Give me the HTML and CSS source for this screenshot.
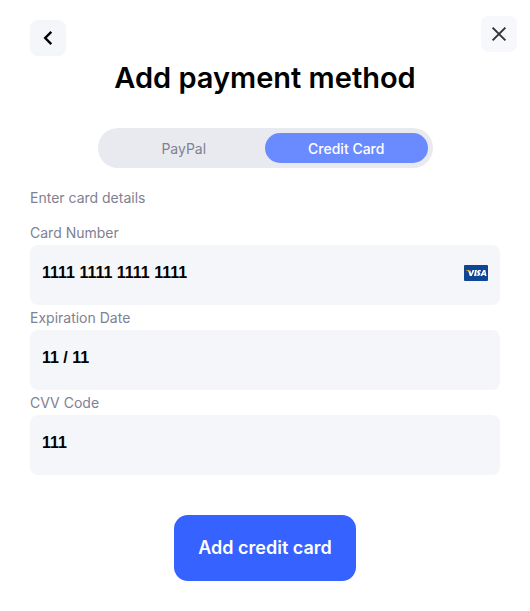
FILE: index.html
```html
<!DOCTYPE html>
<html lang="en">
<head>
    <meta charset="UTF-8">
    <meta name="viewport" content="width=device-width, initial-scale=1.0">
    <title>Add payment method</title>
    <link rel="stylesheet" href="styles.css">
</head>
<body>
    <main class="modal">
        <button type="button" class="icon-button close-button" aria-label="Close">
            <svg width="16" height="16" viewBox="0 0 16 16" fill="none" stroke="#333539" stroke-width="2">
                <path d="M1.6 1.6 14.4 14.4M14.4 1.6 1.6 14.4"/>
            </svg>
        </button>
        <button type="button" class="icon-button" aria-label="Back">
            <svg width="16" height="16" viewBox="0 0 16 16" fill="none" stroke="#000" stroke-width="2.4">
                <path d="M11.3 1.8 5.200 8l6.100 6.200"/>
            </svg>
        </button>

        <h1>Add payment method</h1>

        <div class="tabs">
            <button type="button" class="tab">PayPal</button>
            <button type="button" class="tab active">Credit Card</button>
        </div>

        <form class="card-form">
            <p class="form-hint">Enter card details</p>

            <label for="cardNumber">Card Number</label>
            <div class="field">
                <input type="text" id="cardNumber" value="1111 1111 1111 1111" inputmode="numeric">
                <svg class="card-brand" width="24" height="16" viewBox="0 0 24 16" role="img" aria-label="Card brand">
                    <rect width="24" height="16" rx="1" fill="#0e4595"/>
                    <path d="M4.2 5.800 5.800 10.900h1.900L10.500 5.100H8.600L7.100 8.900 6.400 5.800zM10 10.900 11.100 5.100H12.900L11.800 10.900zM16.900 5.300 16.600 6.800C15.800 6.400 14.800 6.300 14.800 6.800 14.800 7.300 16.500 7.500 16.400 8.900 16.300 10.600 14.100 11.300 12.200 10.600L12.500 9.200C13.400 9.700 14.600 9.700 14.600 9.200 14.600 8.600 13 8.300 13.100 6.900 13.200 5.200 15.300 4.600 16.900 5.300zM16.300 10.900 19.100 5.600C19.300 5.200 19.600 5.100 20 5.100H21.300L22.500 10.900H20.900L20.700 9.900H18.700L18.200 10.900zM19.300 8.700H20.500L20.200 6.800z" fill="#fff"/>
                    <path d="M2 5h2.900c.5 0 .8.200.9.700l.4 1.600C5.200 6.400 3.900 5.900 2 5.600z" fill="#f2ae14"/>
                </svg>
            </div>

            <label for="expirationDate">Expiration Date</label>
            <div class="field">
                <input type="text" id="expirationDate" value="11 / 11" inputmode="numeric">
            </div>

            <label for="cvvCode">CVV Code</label>
            <div class="field">
                <input type="text" id="cvvCode" value="111" inputmode="numeric">
            </div>

            <button type="submit" class="submit-button">Add credit card</button>
        </form>
    </main>
</body>
</html>
```
FILE: styles.css
```css
* {
    box-sizing: border-box;
}
body {
    margin: 0;
    background-color: #fff;
    color: #000;
    font-family: Inter, "Liberation Sans", sans-serif;
}
button,
input {
    font-family: inherit;
    border: none;
}
button {
    cursor: pointer;
}
.modal {
    position: relative;
    padding: 20px 30px 30px;
}
.icon-button {
    display: flex;
    justify-content: center;
    align-items: center;
    width: 36px;
    height: 36px;
    padding: 0;
    border-radius: 8px;
    background-color: #f4f6fa;
}
.close-button {
    position: absolute;
    top: 16px;
    right: 13px;
    background-color: #f7f8fb;
}
h1 {
    margin: 0 0 28px;
    font-size: 29px;
    font-weight: 600;
    line-height: 44px;
    text-align: center;
}

/* payment type switch */
.tabs {
    display: flex;
    width: 100%;
    max-width: 335px;
    height: 40px;
    margin: 0 auto 20px;
    padding: 5px;
    border-radius: 20px;
    background-color: #e8eaef;
}
.tab {
    flex: 1;
    padding: 0;
    border-radius: 15px;
    background-color: transparent;
    color: #808191;
    font-size: 14px;
}
.tab.active {
    background-color: #6a8bff;
    color: #fff;
    font-weight: 500;
}

.card-form {
    display: flex;
    flex-direction: column;
    color: #808191;
    font-size: 14px;
}
.form-hint {
    margin: 0 0 12px;
    line-height: 20px;
}
label {
    line-height: 25px;
}
.field {
    display: flex;
    align-items: center;
    height: 60px;
    padding: 0 12px;
    border-radius: 8px;
    background-color: #f4f6fa;
}
.field input {
    flex: 1;
    min-width: 0;
    height: 100%;
    padding: 0 0 4px;
    background-color: transparent;
    color: #000;
    font-family: "Liberation Sans", Arial, sans-serif;
    font-size: 16px;
    font-weight: 600;
    outline: none;
}
.card-brand {
    margin-bottom: 4px;
}
.submit-button {
    align-self: center;
    margin-top: 40px;
    padding: 20px 24px;
    border-radius: 14px;
    background-color: #3663ff;
    color: #fff;
    font-size: 18px;
    font-weight: 600;
    line-height: 26px;
}
```
